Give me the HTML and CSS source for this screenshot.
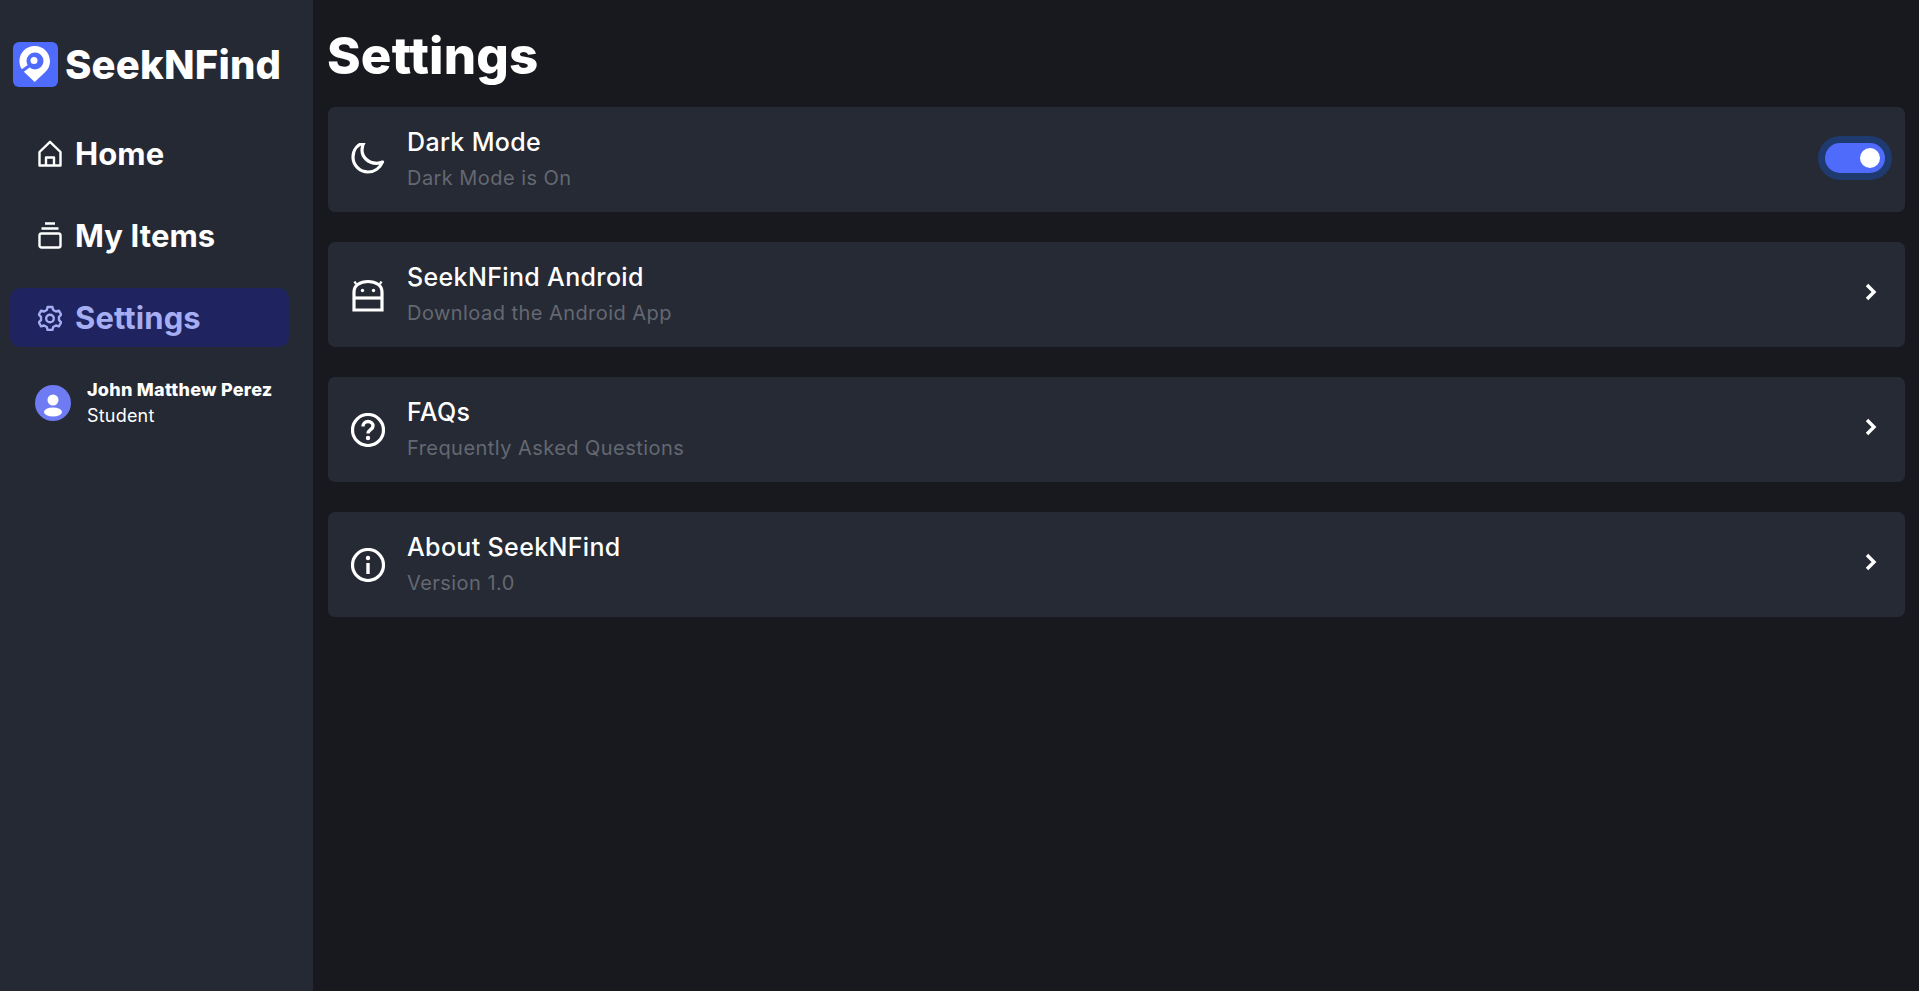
FILE: index.html
```html
<!DOCTYPE html>
<html lang="en">
<head>
    <meta charset="UTF-8">
    <meta name="viewport" content="width=device-width, initial-scale=1.0">
    <title>SeekNFind - Settings</title>
    <link rel="stylesheet" href="styles.css">
</head>
<body>
    <aside class="sidebar">
        <div class="brand">
            <svg class="brand-logo" viewBox="0 0 45 45">
                <rect width="45" height="45" rx="6" fill="#4f6bfb"/>
                <path d="M21.700 4C13 4 6.400 10.800 6.400 19.300c0 4.500 2 8.300 5 11L21.700 40l10.300-9.700c3-2.700 5-6.500 5-11C37 10.800 30.400 4 21.700 4z" fill="#fff"/>
                <circle cx="22" cy="19" r="8.500" fill="#4f6bfb"/>
                <circle cx="21" cy="18.500" r="3.500" fill="#fff"/>
                <path d="M16 24 5 32" stroke="#4f6bfb" stroke-width="3.200"/>
            </svg>
            <span class="brand-name">SeekNFind</span>
        </div>
        <nav class="nav">
            <a class="nav-item" href="#">
                <svg class="nav-icon" viewBox="0 0 24 27" fill="none" stroke="currentColor" stroke-width="2.400" stroke-linejoin="round">
                    <path d="M1.500 12 12 1.800 22.500 12v13.500h-21z"/>
                    <path d="M8 25.500v-8h8v8"/>
                </svg>
                <span>Home</span>
            </a>
            <a class="nav-item" href="#">
                <svg class="nav-icon" viewBox="0 0 24 27" fill="none" stroke="currentColor" stroke-width="2.400" stroke-linejoin="round">
                    <path d="M7 1.500h10M3.500 6.500h17"/>
                    <rect x="1.500" y="11.500" width="21" height="14" rx="2"/>
                </svg>
                <span>My Items</span>
            </a>
            <a class="nav-item active" href="#">
                <svg class="nav-icon" viewBox="0 0 24 24" fill="none" stroke="currentColor" stroke-width="2.400" stroke-linejoin="round">
                    <path d="M9.600 1.500h4.800l.8 3 2.700 1.500 3-.8 2.300 4-2.200 2.200v3.200l2.200 2.200-2.300 4-3-.8-2.700 1.500-.8 3H9.600l-.8-3-2.700-1.500-3 .8-2.300-4 2.200-2.200v-3.200L.8 9.200l2.300-4 3 .8 2.700-1.500z"/>
                    <circle cx="12" cy="13" r="3.800"/>
                </svg>
                <span>Settings</span>
            </a>
        </nav>
        <div class="user">
            <svg class="user-avatar" viewBox="0 0 36 36">
                <circle cx="18" cy="18" r="18" fill="#6e7bf2"/>
                <circle cx="18" cy="15" r="5.500" fill="#fff"/>
                <ellipse cx="18" cy="27" rx="9" ry="4.500" fill="#fff"/>
            </svg>
            <div>
                <div class="user-name">John Matthew Perez</div>
                <div class="user-role">Student</div>
            </div>
        </div>
    </aside>

    <main class="content">
        <h1>Settings</h1>

        <div class="card">
            <svg class="card-icon" viewBox="0 3 34 34" fill="none" stroke="currentColor" stroke-width="3.200" stroke-linejoin="round">
                <path d="M13 2.500C6.500 4.500 2 10 2 17c0 8.500 6.800 15 15 15 6.500 0 12-4 14.500-10-2 1-4 1.300-6 1.300C17 23.300 11 17 11 10c0-2.700.7-5.300 2-7.500z"/>
            </svg>
            <div class="card-text">
                <div class="card-title">Dark Mode</div>
                <div class="card-sub">Dark Mode is On</div>
            </div>
            <div class="toggle"><span class="toggle-knob"></span></div>
        </div>

        <div class="card">
            <svg class="card-icon" viewBox="0 0 34 34" fill="none" stroke="currentColor" stroke-width="3.200" stroke-linejoin="miter">
                <path d="M3 32V14C3 7.500 9 3.500 17 3.500S31 7.500 31 14v18z"/>
                <path d="M3 20h28"/>
                <path d="M5 6 3.500 3.500M29 6l1.500-2.500" stroke-width="2.400"/>
                <circle cx="11.500" cy="12.500" r="1.700" fill="currentColor" stroke="none"/>
                <circle cx="22.500" cy="12.500" r="1.700" fill="currentColor" stroke="none"/>
            </svg>
            <div class="card-text">
                <div class="card-title">SeekNFind Android</div>
                <div class="card-sub">Download the Android App</div>
            </div>
            <svg class="chevron" viewBox="0 0 12 18" fill="none" stroke="currentColor" stroke-width="3.400">
                <path d="M2 2l7 7-7 7"/>
            </svg>
        </div>

        <div class="card">
            <svg class="card-icon" viewBox="0 0 34 34" fill="none" stroke="currentColor" stroke-width="3.200">
                <circle cx="17" cy="17" r="15.500"/>
                <path d="M12 13.500c0-3 2.200-5 5-5s5 2 5 4.500c0 3.500-5 3.800-5 7.500" stroke-width="3.400"/>
                <circle cx="17" cy="25" r="2.200" fill="currentColor" stroke="none"/>
            </svg>
            <div class="card-text">
                <div class="card-title">FAQs</div>
                <div class="card-sub">Frequently Asked Questions</div>
            </div>
            <svg class="chevron" viewBox="0 0 12 18" fill="none" stroke="currentColor" stroke-width="3.400">
                <path d="M2 2l7 7-7 7"/>
            </svg>
        </div>

        <div class="card">
            <svg class="card-icon" viewBox="0 0 34 34" fill="none" stroke="currentColor" stroke-width="3.200">
                <circle cx="17" cy="17" r="15.500"/>
                <path d="M17 15v11" stroke-width="3.400"/>
                <circle cx="17" cy="10" r="2.200" fill="currentColor" stroke="none"/>
            </svg>
            <div class="card-text">
                <div class="card-title">About SeekNFind</div>
                <div class="card-sub">Version 1.0</div>
            </div>
            <svg class="chevron" viewBox="0 0 12 18" fill="none" stroke="currentColor" stroke-width="3.400">
                <path d="M2 2l7 7-7 7"/>
            </svg>
        </div>
    </main>
</body>
</html>
```

FILE: styles.css
```css
* {
    box-sizing: border-box;
}
html, body {
    height: 100%;
}
body {
    margin: 0;
    display: flex;
    overflow: hidden;
    background: #18191e;
    color: #fff;
    font-family: 'Inter', 'Open Sans', sans-serif;
}
.sidebar {
    width: 313px;
    flex-shrink: 0;
    background: #252933;
    padding: 40px 24px 0 10px;
}
.brand {
    display: flex;
    align-items: center;
    gap: 7px;
    margin-left: 3px;
    margin-bottom: 35px;
}
.brand-logo {
    width: 45px;
    height: 45px;
    flex-shrink: 0;
}
.brand-name {
    font-size: 40px;
    font-weight: 800;
    letter-spacing: 0.2px;
}
.nav {
    display: flex;
    flex-direction: column;
    gap: 23px;
}
.nav-item {
    display: flex;
    align-items: center;
    gap: 13px;
    height: 59px;
    padding-left: 28px;
    border-radius: 10px;
    color: #fff;
    text-decoration: none;
    font-size: 31px;
    font-weight: 700;
    letter-spacing: 0.1px;
}
.nav-item.active {
    background: #1f235f;
    color: #a5aef2;
}
.nav-icon {
    width: 24px;
    height: 27px;
    flex-shrink: 0;
}
.user {
    display: flex;
    align-items: center;
    gap: 16px;
    margin-top: 30px;
    padding-left: 25px;
}
.user-avatar {
    width: 36px;
    height: 36px;
    flex-shrink: 0;
}
.user-name {
    font-size: 18px;
    font-weight: 800;
    letter-spacing: 0.25px;
    line-height: 26px;
    white-space: nowrap;
}
.user-role {
    font-size: 18px;
    letter-spacing: 0.2px;
    line-height: 25px;
}
.content {
    flex: 1;
    padding: 0 14px 0 15px;
}
h1 {
    margin: 0 0 0 -1px;
    height: 107px;
    padding-top: 24px;
    font-size: 51px;
    line-height: 64px;
    font-weight: 800;
    letter-spacing: 0.2px;
}
.card {
    display: flex;
    align-items: center;
    height: 105px;
    margin-bottom: 30px;
    padding: 0 26px 0 23px;
    background: #262a34;
    border-radius: 7px;
}
.card-icon {
    width: 34px;
    height: 34px;
    flex-shrink: 0;
}
.card-text {
    flex: 1;
    margin-left: 22px;
    margin-top: -3px;
}
.card-title {
    font-size: 25px;
    font-weight: 500;
    letter-spacing: 0.35px;
    line-height: 34px;
}
.card-sub {
    margin-top: 5px;
    font-size: 20px;
    letter-spacing: 0.45px;
    line-height: 28px;
    color: #646872;
}
.toggle {
    display: flex;
    align-items: center;
    justify-content: flex-end;
    width: 60px;
    height: 30px;
    margin: -3px -6px 0 0;
    padding-right: 5px;
    border-radius: 15px;
    background: #4f6bfb;
    box-shadow: 0 0 0 7px #1f3a6e;
}
.toggle-knob {
    width: 20px;
    height: 20px;
    border-radius: 50%;
    background: #fff;
}
.chevron {
    width: 12px;
    height: 18px;
    margin: -5px 2px 0 0;
}
```
